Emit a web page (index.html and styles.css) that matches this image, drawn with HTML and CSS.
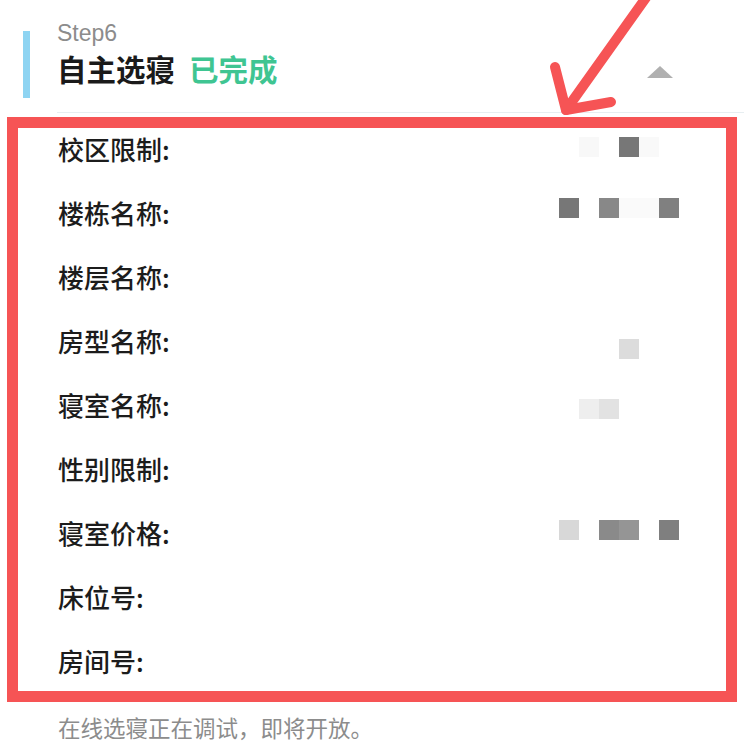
FILE: index.html
```html
<!DOCTYPE html>
<html lang="zh-CN">
<head>
<meta charset="utf-8">
<title>Step6 自主选寝</title>
<link rel="stylesheet" href="styles.css">
</head>
<body>
<div class="page">
  <header class="step-head">
    <span class="bar"></span>
    <div class="head-main">
      <div class="step-no">Step6</div>
      <div class="title-row">
        <h2 class="title">自主选寝<span class="status">已完成</span></h2>
        <span class="caret"></span>
      </div>
    </div>
  </header>

  <section class="details">
    <div class="row">
      <span class="label">校区限制:</span>
      <span class="mosaic off-n2"><i></i><i class="g-f8"></i><i></i><i class="g-77"></i><i class="g-f9"></i><i></i></span>
    </div>
    <div class="row">
      <span class="label">楼栋名称:</span>
      <span class="mosaic off-n5"><i class="g-77"></i><i></i><i class="g-88"></i><i class="g-fa"></i><i class="g-fa"></i><i class="g-80"></i></span>
    </div>
    <div class="row">
      <span class="label">楼层名称:</span>
    </div>
    <div class="row">
      <span class="label">房型名称:</span>
      <span class="mosaic off-p8"><i></i><i></i><i></i><i class="g-dc"></i><i></i><i></i></span>
    </div>
    <div class="row">
      <span class="label">寝室名称:</span>
      <span class="mosaic off-p4"><i></i><i class="g-ee"></i><i class="g-e2"></i><i></i><i></i><i></i></span>
    </div>
    <div class="row">
      <span class="label">性别限制:</span>
    </div>
    <div class="row">
      <span class="label">寝室价格:</span>
      <span class="mosaic off-n3"><i class="g-d8"></i><i></i><i class="g-8a"></i><i class="g-95"></i><i></i><i class="g-7f"></i></span>
    </div>
    <div class="row">
      <span class="label">床位号:</span>
    </div>
    <div class="row">
      <span class="label">房间号:</span>
    </div>
  </section>

  <p class="note">在线选寝正在调试，即将开放。</p>

  <svg class="arrow" width="744" height="130" viewBox="0 0 744 130" aria-hidden="true">
    <g fill="none" stroke="#f65455" stroke-width="10" stroke-linecap="round" stroke-linejoin="round">
      <line x1="650" y1="-8" x2="566" y2="110"/>
      <polyline points="555,67 566,110 611,102"/>
    </g>
  </svg>
</div>
</body>
</html>
```

FILE: styles.css
```css
html, body {
  margin: 0;
  padding: 0;
  background: #ffffff;
}

body {
  font-family: "Noto Sans CJK SC", "Noto Sans", sans-serif;
  color: #1c1c1c;
}

.page {
  position: relative;
  width: 744px;
  height: 749px;
  overflow: hidden;
}

/* ---------- header ---------- */
.step-head {
  display: flex;
  padding: 20px 0 0 23px;
}

.bar {
  flex: none;
  width: 7px;
  height: 67px;
  margin-top: 11px;
  background: #8ed4f2;
}

.head-main {
  flex: 1;
  margin-left: 27px;
  padding-bottom: 26px;
  border-bottom: 1px solid #e7eef1;
}

.step-no {
  font-family: "Liberation Sans", "Noto Sans", sans-serif;
  font-size: 23px;
  line-height: 26px;
  color: #8c8c8c;
}

.title-row {
  display: flex;
  justify-content: space-between;
  margin-top: 4px;
  height: 36px;
}

.title {
  margin: 0;
  font-size: 29.5px;
  line-height: 36px;
  font-weight: 700;
  color: #1a1a1a;
}

.status {
  margin-left: 14px;
  color: #3fc592;
}

.caret {
  width: 0;
  height: 0;
  margin-top: 16px;
  margin-right: 71px;
  border-left: 13.5px solid transparent;
  border-right: 13.5px solid transparent;
  border-bottom: 12px solid #b0b0b0;
}

/* ---------- detail box ---------- */
.details {
  margin: 4px 7px 0;
  border: 11px solid #f65455;
  padding: 5px 47px 14px 40px;
  display: flex;
  flex-direction: column;
  gap: 32px;
}

.row {
  display: flex;
  justify-content: space-between;
  align-items: center;
  height: 32px;
}

.label {
  font-size: 26px;
  line-height: 32px;
  font-weight: 500;
  color: #1c1c1c;
}

.mosaic {
  display: grid;
  grid-template-columns: repeat(6, 20px);
  height: 20px;
}

.mosaic i {
  display: block;
  width: 20px;
  height: 20px;
}

.off-n2 { transform: translateY(-2px); }
.off-n3 { transform: translateY(-3px); }
.off-n5 { transform: translateY(-5px); }
.off-p4 { transform: translateY(4px); }
.off-p8 { transform: translateY(8px); }

.g-77 { background: #777777; }
.g-7f { background: #7f7f7f; }
.g-80 { background: #808080; }
.g-88 { background: #888888; }
.g-8a { background: #8a8a8a; }
.g-95 { background: #959595; }
.g-d8 { background: #d8d8d8; }
.g-dc { background: #dcdcdc; }
.g-e2 { background: #e2e2e2; }
.g-ee { background: #eeeeee; }
.g-f8 { background: #f8f8f8; }
.g-f9 { background: #f9f9f9; }
.g-fa { background: #fafafa; }

/* ---------- footer note ---------- */
.note {
  margin: 10px 0 0 58px;
  font-size: 22.5px;
  line-height: 30px;
  color: #8c8c8c;
}

/* ---------- annotation arrow ---------- */
.arrow {
  position: absolute;
  top: 0;
  left: 0;
  pointer-events: none;
}
```
